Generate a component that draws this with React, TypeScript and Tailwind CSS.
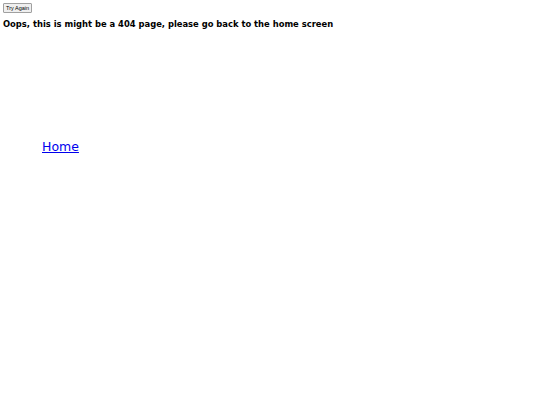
export default function App() {
  return (
    <div className="min-h-[405px] bg-white p-[3px] font-['DejaVu_Sans',sans-serif] text-black">
      <button className="block h-[10px] rounded-[1px] border border-[#a0a0a0] bg-[#efefef] px-[2px] font-['Liberation_Sans',sans-serif] text-[5.5px] leading-[8px] text-black">
        Try Again
      </button>
      <h1 className="mt-[5px] text-[8.4px] font-bold leading-[12px]">
        Oops, this is might be a 404 page, please go back to the home screen
      </h1>
      <div className="mt-[104px] pl-[39px]">
        <a href="#" className="text-[12.5px] leading-[16px] text-[#0000ee] underline">
          Home
        </a>
      </div>
    </div>
  )
}
